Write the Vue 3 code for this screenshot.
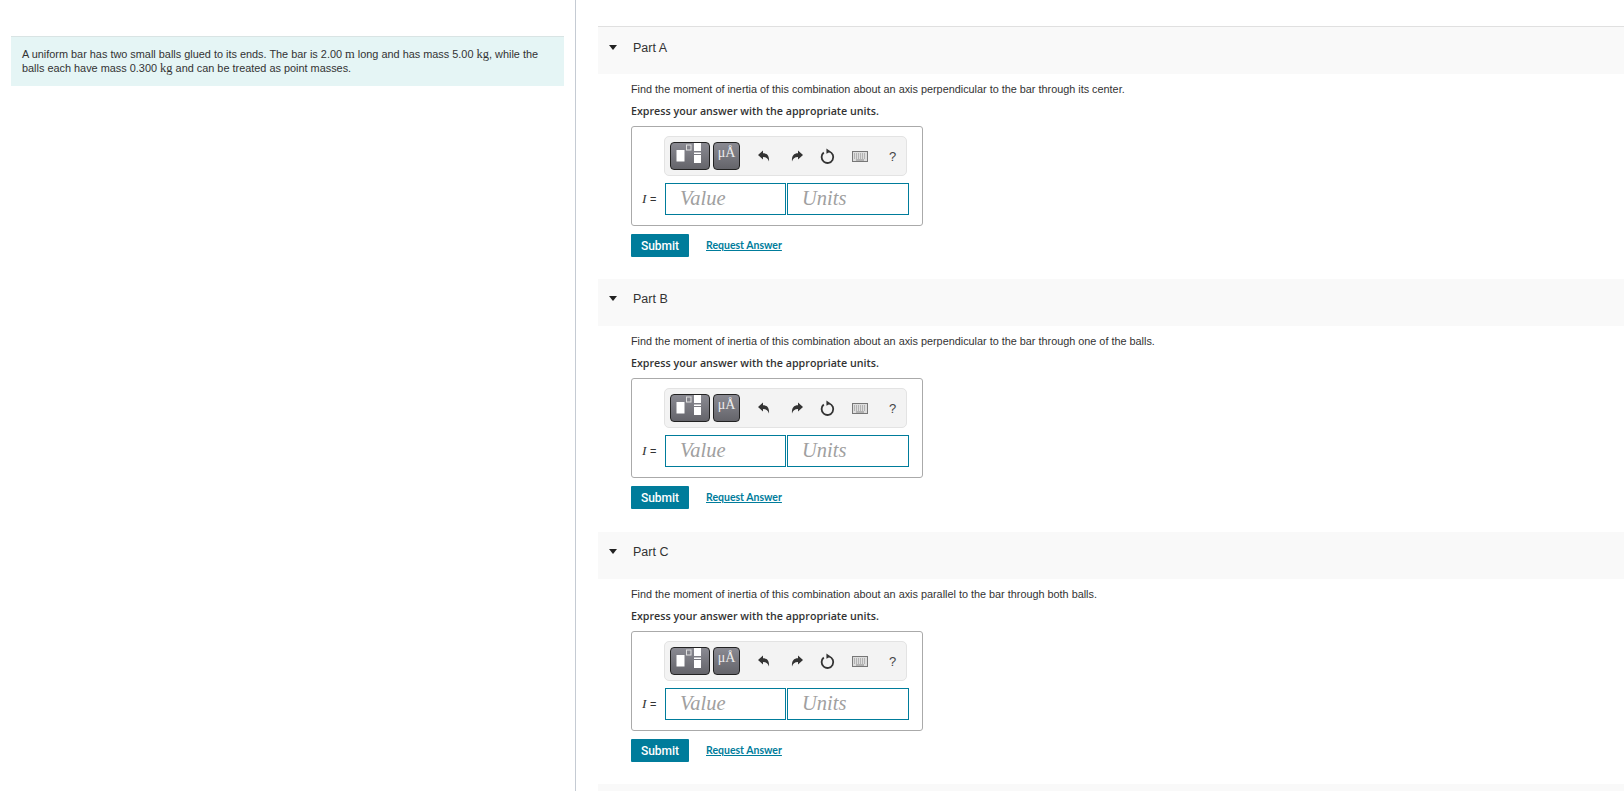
<script setup>
const parts = [
  { name: 'Part A', text: 'Find the moment of inertia of this combination about an axis perpendicular to the bar through its center.' },
  { name: 'Part B', text: 'Find the moment of inertia of this combination about an axis perpendicular to the bar through one of the balls.' },
  { name: 'Part C', text: 'Find the moment of inertia of this combination about an axis parallel to the bar through both balls.' },
];
</script>

<template>
  <div class="page">
    <aside class="left">
      <div class="intro">
        A uniform bar has two small balls glued to its ends. The bar is 2.00 <span class="unit">m</span> long and has mass 5.00 <span class="unit">kg</span>, while the balls each have mass 0.300 <span class="unit">kg</span> and can be treated as point masses.
      </div>
    </aside>
    <main class="right">
      <section v-for="part in parts" :key="part.name" class="part">
        <header class="part-head">
          <span class="caret"></span>
          <span class="part-name">{{ part.name }}</span>
        </header>
        <div class="part-body">
          <p class="question">{{ part.text }}</p>
          <p class="express">Express your answer with the appropriate units.</p>
          <div class="answer-box">
            <div class="toolbar">
              <div class="tool-btn templates">
                <svg width="38" height="26" viewBox="0 0 38 26">
                  <rect x="5.5" y="7" width="8" height="11.5" fill="#fff" />
                  <rect x="15.5" y="2" width="4.5" height="5" fill="none" stroke="#ddd" />
                  <rect x="23" y="0" width="7" height="8" fill="#fff" />
                  <rect x="23" y="9.5" width="7" height="1.5" fill="#fff" />
                  <rect x="23" y="12" width="7" height="8" fill="#fff" />
                </svg>
              </div>
              <div class="tool-btn symbols">μÅ</div>
              <svg class="icon undo" width="14" height="14" viewBox="0 0 14 14">
                <path d="M1 6 L6 1.5 V4.2 C10 4.2 12.5 6.5 12 12.5 C11 9.5 9.5 8 6 8 V10.5 Z" fill="#333" />
              </svg>
              <svg class="icon redo" width="14" height="14" viewBox="0 0 14 14">
                <path d="M13 6 L8 1.5 V4.2 C4 4.2 1.5 6.5 2 12.5 C3 9.5 4.5 8 8 8 V10.5 Z" fill="#333" />
              </svg>
              <svg class="icon reset" width="17" height="17" viewBox="0 0 16 16">
                <path d="M9.5 3.3 A5.5 5.5 0 1 1 4.5 4.3" fill="none" stroke="#333" stroke-width="1.7" />
                <path d="M7 0.5 L11 3.2 L7 5.5 Z" fill="#333" />
              </svg>
              <svg class="icon keyboard" width="16" height="11" viewBox="0 0 16 11">
                <rect x="0.5" y="0.5" width="15" height="10" fill="#ddd" stroke="#777" />
                <path d="M2 3 H14 M2 5 H14 M2 7 H14" stroke="#888" stroke-dasharray="1 1" />
                <path d="M4 9 H12" stroke="#888" />
              </svg>
              <span class="help">?</span>
            </div>
            <div class="input-row">
              <span class="var"><i>I</i> <span class="eq">=</span></span>
              <div class="field value">Value</div>
              <div class="field units">Units</div>
            </div>
          </div>
          <div class="actions">
            <button class="submit">Submit</button>
            <a class="request">Request Answer</a>
          </div>
        </div>
      </section>
      <div class="next-strip"></div>
    </main>
  </div>
</template>

<style>
html, body {
  overflow: hidden;
  background: #fff;
}
</style>

<style scoped>
.page {
  display: flex;
  height: 791px;
  overflow: hidden;
  font-family: "Liberation Sans", Arial, sans-serif;
  color: #333;
}

.left {
  width: 576px;
  flex: none;
  padding: 36px 11px 0 11px;
  box-sizing: border-box;
  border-right: 1px solid #c5cbd3;
}

.intro {
  background: #e5f5f5;
  border-top: 1px solid #d9e4e4;
  padding: 10px 24px 11px 11px;
  font-size: 10.9px;
  line-height: 14px;
}

.unit {
  font-family: "Liberation Serif", serif;
  font-size: 12.5px;
}

.right {
  flex: 1;
  padding: 26px 0 0 22px;
  min-width: 0;
}

.part {
  height: 252px;
}

.part-head {
  height: 47px;
  margin-top: 1px;
  background: #f9f9f9;
  display: flex;
  align-items: center;
  padding-bottom: 8px;
  box-sizing: border-box;
}

.part:first-child .part-head {
  height: 48px;
  margin-top: 0;
  padding-bottom: 6px;
  border-top: 1px solid #e0e0e0;
}

.caret {
  width: 0;
  height: 0;
  border-left: 4px solid transparent;
  border-right: 4px solid transparent;
  border-top: 5px solid #222;
  margin-left: 11px;
}

.part-name {
  margin-left: 16px;
  font-size: 12.5px;
}

.part-body {
  padding: 8px 0 0 33px;
}

.question {
  margin: 0;
  font-size: 10.85px;
  line-height: 14px;
}

.express {
  margin: 8px 0 0;
  font-family: "Open Sans", sans-serif;
  font-weight: 600;
  font-size: 10.7px;
  line-height: 14px;
}

.answer-box {
  margin-top: 8px;
  width: 292px;
  height: 100px;
  box-sizing: border-box;
  border: 1px solid #aaa;
  border-radius: 3px;
  padding: 9px 15px 0 32px;
}

.toolbar {
  width: 243px;
  height: 40px;
  box-sizing: border-box;
  background: #f3f3f3;
  border: 1px solid #e3e3e3;
  border-radius: 5px;
  display: flex;
  align-items: center;
  padding-left: 5px;
}

.tool-btn {
  height: 28px;
  box-sizing: border-box;
  background: linear-gradient(#8a8a92, #64646a);
  border: 1px solid #222;
  border-radius: 4px;
  color: #eee;
}

.templates {
  width: 40px;
  overflow: hidden;
}

.templates svg {
  display: block;
}

.symbols {
  width: 27px;
  margin-left: 3px;
  text-align: center;
  font-family: "Liberation Serif", serif;
  font-size: 14px;
  line-height: 20px;
}

.undo {
  margin-left: 17px;
}

.redo {
  margin-left: 19px;
}

.reset {
  margin-left: 15px;
}

.keyboard {
  margin-left: 16px;
}

.help {
  margin-left: 21px;
  font-size: 13px;
  color: #444;
}

.input-row {
  display: flex;
  align-items: center;
  margin-top: 7px;
  margin-left: -22px;
  width: 278px;
}

.var {
  width: 23px;
  flex: none;
  font-family: "Liberation Serif", serif;
  font-size: 13.5px;
  white-space: nowrap;
}

.eq {
  font-family: "Liberation Sans", sans-serif;
  font-size: 11px;
}

.field {
  box-sizing: border-box;
  height: 32px;
  border: 1px solid #007c9b;
  font-family: "Liberation Serif", serif;
  font-style: italic;
  font-size: 20.5px;
  line-height: 28px;
  color: #a0a0a0;
  padding-left: 14px;
}

.value {
  width: 121px;
}

.units {
  width: 122px;
  margin-left: 1px;
}

.actions {
  display: flex;
  align-items: center;
  margin-top: 8px;
}

.submit {
  width: 58px;
  height: 23px;
  background: #007c9b;
  border: none;
  border-radius: 1px;
  color: #fff;
  font-family: Roboto, sans-serif;
  font-weight: 500;
  font-size: 12px;
  padding: 0;
}

.request {
  margin-left: 17px;
  padding-bottom: 1px;
  color: #007c9b;
  text-decoration: underline;
  font-family: Lato, sans-serif;
  font-weight: 700;
  font-size: 10.5px;
}

.next-strip {
  height: 40px;
  background: #f9f9f9;
}
</style>
